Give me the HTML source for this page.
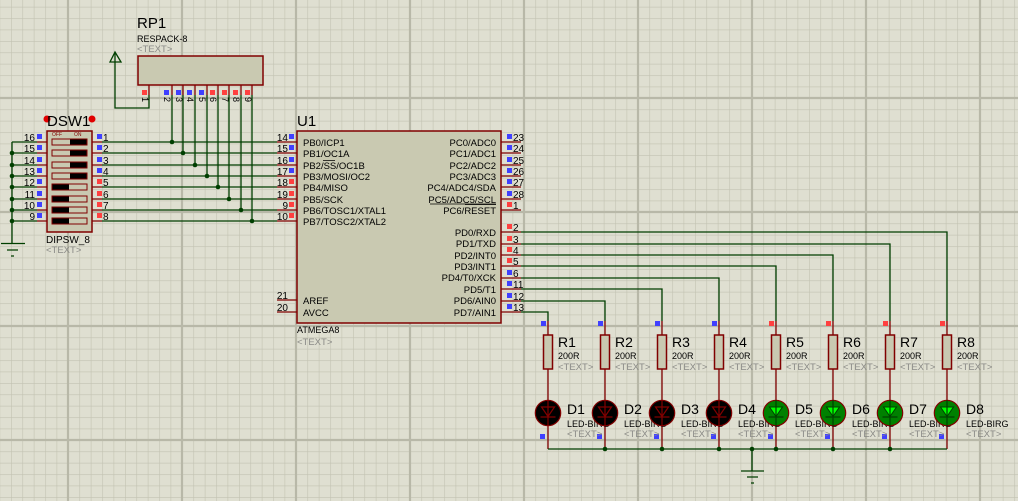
<!DOCTYPE html>
<html><head><meta charset="utf-8"><style>
html,body{margin:0;padding:0;background:#dfdfd1;}
svg{display:block;font-family:"Liberation Sans",sans-serif;}
.w{stroke:#003f00;stroke-width:1.3;fill:none}
.p{stroke:#800000;stroke-width:1.3;fill:none}
.b{fill:#c9c9b1;stroke:#800000;stroke-width:1.5}
.bl{fill:#4040ff}.rd{fill:#ff4040}
.t{font-size:10px;fill:#000}
.g{font-size:9.5px;fill:#8a8a86}
.l{font-size:15px;fill:#000}
.dot{fill:#003f00}
</style></head><body>
<svg width="1018" height="501" viewBox="0 0 1018 501">
<defs>
<pattern id="gr" x="11" y="6.8" width="11.4" height="11.4" patternUnits="userSpaceOnUse">
<path d="M0 0V11.4M0 0H11.4" stroke="#c2c2b2" stroke-width="1.2"/>
</pattern>
</defs>
<rect width="1018" height="501" fill="#dfdfd1"/>
<rect width="1018" height="501" fill="url(#gr)"/>
<g stroke="#b8b8a8" stroke-width="2.2">
<path d="M68 0V501M182 0V501M296 0V501M410 0V501M524 0V501M638 0V501M752 0V501M866 0V501M980 0V501"/>
<path d="M0 98H1018M0 212H1018M0 326H1018M0 440H1018"/>
</g>

<!-- RP1 -->
<text x="137" y="28" class="l">RP1</text>
<text x="137" y="42" class="t" style="font-size:9px">RESPACK-8</text>
<text x="137" y="52" class="g">&lt;TEXT&gt;</text>
<rect x="138" y="56" width="125" height="29" class="b"/>
<path class="w" d="M149 95V108H115V53"/>
<path class="w" d="M115 52L110 62H121Z" fill="none"/>
<path class="p" d="M149 85V95M172 85V95M183 85V95M195 85V95M207 85V95M218 85V95M229 85V95M241 85V95M252 85V95"/>
<rect x="142" y="90" width="5" height="5" class="rd"/>
<rect x="164" y="90" width="5" height="5" class="bl"/><rect x="176" y="90" width="5" height="5" class="bl"/>
<rect x="187" y="90" width="5" height="5" class="bl"/><rect x="199" y="90" width="5" height="5" class="bl"/>
<rect x="210" y="90" width="5" height="5" class="rd"/><rect x="222" y="90" width="5" height="5" class="rd"/>
<rect x="233" y="90" width="5" height="5" class="rd"/><rect x="245" y="90" width="5" height="5" class="rd"/>
<g class="t" style="font-size:9px">
<text transform="translate(142,97) rotate(90)">1</text>
<text transform="translate(164,97) rotate(90)">2</text>
<text transform="translate(176,97) rotate(90)">3</text>
<text transform="translate(187,97) rotate(90)">4</text>
<text transform="translate(199,97) rotate(90)">5</text>
<text transform="translate(210,97) rotate(90)">6</text>
<text transform="translate(222,97) rotate(90)">7</text>
<text transform="translate(233,97) rotate(90)">8</text>
<text transform="translate(245,97) rotate(90)">9</text>
</g>
<!-- vertical wires from RP1 -->
<path class="w" d="M172 95V142M183 95V153M195 95V165M207 95V176M218 95V187M229 95V199M241 95V210M252 95V221"/>

<!-- DSW1 -->
<circle cx="47" cy="119" r="3.5" fill="#e00000"/><circle cx="92" cy="119" r="3.5" fill="#e00000"/>
<text x="47" y="126" class="l">DSW1</text>
<rect x="47" y="131" width="45" height="101" class="b"/>
<text x="52" y="136" style="font-size:5px;fill:#800000">OFF</text>
<text x="74" y="136" style="font-size:5px;fill:#800000">ON</text>
<g stroke="#800000" stroke-width="1" fill="#c9c9b1">
<rect x="52" y="139" width="35" height="6"/><rect x="52" y="150" width="35" height="6"/>
<rect x="52" y="162" width="35" height="6"/><rect x="52" y="173" width="35" height="6"/>
<rect x="52" y="184" width="35" height="6"/><rect x="52" y="196" width="35" height="6"/>
<rect x="52" y="207" width="35" height="6"/><rect x="52" y="218" width="35" height="6"/>
</g>
<g fill="#000">
<rect x="70" y="139.5" width="16.5" height="5"/><rect x="70" y="150.5" width="16.5" height="5"/>
<rect x="70" y="162.5" width="16.5" height="5"/><rect x="70" y="173.5" width="16.5" height="5"/>
<rect x="52.5" y="184.5" width="16.5" height="5"/><rect x="52.5" y="196.5" width="16.5" height="5"/>
<rect x="52.5" y="207.5" width="16.5" height="5"/><rect x="52.5" y="218.5" width="16.5" height="5"/>
</g>
<text x="46" y="243" class="t">DIPSW_8</text>
<text x="46" y="253" class="g">&lt;TEXT&gt;</text>
<!-- left pins -->
<path class="p" d="M37 142H47M37 153H47M37 165H47M37 176H47M37 187H47M37 199H47M37 210H47M37 221H47"/>
<path class="w" d="M12 142H37M12 153H37M12 165H37M12 176H37M12 187H37M12 199H37M12 210H37M12 221H37M12 142V243M1 243.5H25M7 250H18M11 256H14"/>
<g class="dot"><circle cx="12" cy="153" r="2.3"/><circle cx="12" cy="165" r="2.3"/><circle cx="12" cy="176" r="2.3"/><circle cx="12" cy="187" r="2.3"/><circle cx="12" cy="199" r="2.3"/><circle cx="12" cy="210" r="2.3"/><circle cx="12" cy="221" r="2.3"/></g>
<g class="bl"><rect x="37" y="134" width="5" height="5"/><rect x="37" y="145" width="5" height="5"/><rect x="37" y="157" width="5" height="5"/><rect x="37" y="168" width="5" height="5"/><rect x="37" y="179" width="5" height="5"/><rect x="37" y="191" width="5" height="5"/><rect x="37" y="202" width="5" height="5"/><rect x="37" y="213" width="5" height="5"/></g>
<g class="t" text-anchor="end"><text x="35" y="141">16</text><text x="35" y="152">15</text><text x="35" y="164">14</text><text x="35" y="175">13</text><text x="35" y="186">12</text><text x="35" y="198">11</text><text x="35" y="209">10</text><text x="35" y="220">9</text></g>
<!-- right pins -->
<path class="p" d="M92 142H102M92 153H102M92 165H102M92 176H102M92 187H102M92 199H102M92 210H102M92 221H102"/>
<path class="w" d="M102 142H277M102 153H277M102 165H277M102 176H277M102 187H277M102 199H277M102 210H277M102 221H277"/>
<rect x="97" y="134" width="5" height="5" class="bl"/><rect x="97" y="145" width="5" height="5" class="bl"/><rect x="97" y="157" width="5" height="5" class="bl"/><rect x="97" y="168" width="5" height="5" class="bl"/>
<rect x="97" y="179" width="5" height="5" class="rd"/><rect x="97" y="191" width="5" height="5" class="rd"/><rect x="97" y="202" width="5" height="5" class="rd"/><rect x="97" y="213" width="5" height="5" class="rd"/>
<g class="t"><text x="103" y="141">1</text><text x="103" y="152">2</text><text x="103" y="164">3</text><text x="103" y="175">4</text><text x="103" y="186">5</text><text x="103" y="198">6</text><text x="103" y="209">7</text><text x="103" y="220">8</text></g>
<g class="dot"><circle cx="172" cy="142" r="2.3"/><circle cx="183" cy="153" r="2.3"/><circle cx="195" cy="165" r="2.3"/><circle cx="207" cy="176" r="2.3"/><circle cx="218" cy="187" r="2.3"/><circle cx="229" cy="199" r="2.3"/><circle cx="241" cy="210" r="2.3"/><circle cx="252" cy="221" r="2.3"/></g>

<!-- U1 -->
<text x="297" y="126" class="l">U1</text>
<rect x="297" y="131" width="204" height="192" class="b"/>
<path class="p" d="M277 142H297M277 153H297M277 165H297M277 176H297M277 187H297M277 199H297M277 210H297M277 221H297M277 300H297M277 312H297"/>
<rect x="289" y="134" width="5" height="5" class="bl"/><rect x="289" y="145" width="5" height="5" class="bl"/><rect x="289" y="157" width="5" height="5" class="bl"/><rect x="289" y="168" width="5" height="5" class="bl"/>
<rect x="289" y="179" width="5" height="5" class="rd"/><rect x="289" y="191" width="5" height="5" class="rd"/><rect x="289" y="202" width="5" height="5" class="rd"/><rect x="289" y="213" width="5" height="5" class="rd"/>
<g class="t" text-anchor="end"><text x="288" y="141">14</text><text x="288" y="152">15</text><text x="288" y="164">16</text><text x="288" y="175">17</text><text x="288" y="186">18</text><text x="288" y="198">19</text><text x="288" y="209">9</text><text x="288" y="220">10</text><text x="288" y="299">21</text><text x="288" y="311">20</text></g>
<g class="t" style="font-size:9.5px">
<text x="303" y="146">PB0/ICP1</text><text x="303" y="157">PB1/OC1A</text><text x="303" y="169">PB2/SS/OC1B</text><text x="303" y="180">PB3/MOSI/OC2</text><text x="303" y="191">PB4/MISO</text><text x="303" y="203">PB5/SCK</text><text x="303" y="214">PB6/TOSC1/XTAL1</text><text x="303" y="225">PB7/TOSC2/XTAL2</text>
<text x="303" y="304">AREF</text><text x="303" y="316">AVCC</text>
</g>
<path d="M323 160.5H335M430 204H496M465 204.5H496" stroke="#000" stroke-width="0.8"/>
<g class="t" style="font-size:9.5px" text-anchor="end">
<text x="496" y="146">PC0/ADC0</text><text x="496" y="157">PC1/ADC1</text><text x="496" y="169">PC2/ADC2</text><text x="496" y="180">PC3/ADC3</text><text x="496" y="191">PC4/ADC4/SDA</text><text x="496" y="203">PC5/ADC5/SCL</text><text x="496" y="214">PC6/RESET</text>
<text x="496" y="236">PD0/RXD</text><text x="496" y="247">PD1/TXD</text><text x="496" y="259">PD2/INT0</text><text x="496" y="270">PD3/INT1</text><text x="496" y="281">PD4/T0/XCK</text><text x="496" y="293">PD5/T1</text><text x="496" y="304">PD6/AIN0</text><text x="496" y="316">PD7/AIN1</text>
</g>
<path class="p" d="M501 142H521M501 153H521M501 165H521M501 176H521M501 187H521M501 199H521M501 210H521M501 232H521M501 244H521M501 255H521M501 266H521M501 278H521M501 289H521M501 301H521M501 312H521"/>
<g class="bl"><rect x="507" y="134" width="5" height="5"/><rect x="507" y="145" width="5" height="5"/><rect x="507" y="157" width="5" height="5"/><rect x="507" y="168" width="5" height="5"/><rect x="507" y="179" width="5" height="5"/><rect x="507" y="191" width="5" height="5"/>
<rect x="507" y="270" width="5" height="5"/><rect x="507" y="281" width="5" height="5"/><rect x="507" y="293" width="5" height="5"/><rect x="507" y="304" width="5" height="5"/></g>
<g class="rd"><rect x="507" y="202" width="5" height="5"/><rect x="507" y="224" width="5" height="5"/><rect x="507" y="236" width="5" height="5"/><rect x="507" y="247" width="5" height="5"/><rect x="507" y="258" width="5" height="5"/></g>
<g class="t"><text x="513" y="141">23</text><text x="513" y="152">24</text><text x="513" y="164">25</text><text x="513" y="175">26</text><text x="513" y="186">27</text><text x="513" y="198">28</text><text x="513" y="209">1</text>
<text x="513" y="231">2</text><text x="513" y="243">3</text><text x="513" y="254">4</text><text x="513" y="265">5</text><text x="513" y="277">6</text><text x="513" y="288">11</text><text x="513" y="300">12</text><text x="513" y="311">13</text></g>
<text x="297" y="333" class="t" style="font-size:9px">ATMEGA8</text>
<text x="297" y="345" class="g">&lt;TEXT&gt;</text>

<!-- PD wires -->
<path class="w" d="M521 232H947V321M521 244H890V321M521 255H833V321M521 266H776V321M521 278H719V321M521 289H662V321M521 301H605V321M521 312H548V321"/>

<!-- resistors & LEDs -->
<g class="p">
<path d="M548 321V335M548 369V449M605 321V335M605 369V449M662 321V335M662 369V449M719 321V335M719 369V449M776 321V335M776 369V449M833 321V335M833 369V449M890 321V335M890 369V449M947 321V335M947 369V449"/>
</g>
<g class="b"><rect x="543.5" y="335" width="9" height="34"/><rect x="600.5" y="335" width="9" height="34"/><rect x="657.5" y="335" width="9" height="34"/><rect x="714.5" y="335" width="9" height="34"/><rect x="771.5" y="335" width="9" height="34"/><rect x="828.5" y="335" width="9" height="34"/><rect x="885.5" y="335" width="9" height="34"/><rect x="942.5" y="335" width="9" height="34"/></g>
<g class="bl"><rect x="541" y="321" width="5" height="5"/><rect x="598" y="321" width="5" height="5"/><rect x="655" y="321" width="5" height="5"/><rect x="712" y="321" width="5" height="5"/></g>
<g class="rd"><rect x="769" y="321" width="5" height="5"/><rect x="826" y="321" width="5" height="5"/><rect x="883" y="321" width="5" height="5"/><rect x="940" y="321" width="5" height="5"/></g>
<g class="bl"><rect x="540" y="434" width="5" height="5"/><rect x="597" y="434" width="5" height="5"/><rect x="654" y="434" width="5" height="5"/><rect x="711" y="434" width="5" height="5"/><rect x="768" y="434" width="5" height="5"/><rect x="825" y="434" width="5" height="5"/><rect x="882" y="434" width="5" height="5"/><rect x="939" y="434" width="5" height="5"/></g>
<g class="l" style="font-size:14px"><text x="558" y="347">R1</text><text x="615" y="347">R2</text><text x="672" y="347">R3</text><text x="729" y="347">R4</text><text x="786" y="347">R5</text><text x="843" y="347">R6</text><text x="900" y="347">R7</text><text x="957" y="347">R8</text></g>
<g class="t" style="font-size:9px"><text x="558" y="359">200R</text><text x="615" y="359">200R</text><text x="672" y="359">200R</text><text x="729" y="359">200R</text><text x="786" y="359">200R</text><text x="843" y="359">200R</text><text x="900" y="359">200R</text><text x="957" y="359">200R</text></g>
<g class="g"><text x="558" y="370">&lt;TEXT&gt;</text><text x="615" y="370">&lt;TEXT&gt;</text><text x="672" y="370">&lt;TEXT&gt;</text><text x="729" y="370">&lt;TEXT&gt;</text><text x="786" y="370">&lt;TEXT&gt;</text><text x="843" y="370">&lt;TEXT&gt;</text><text x="900" y="370">&lt;TEXT&gt;</text><text x="957" y="370">&lt;TEXT&gt;</text></g>
<g class="l" style="font-size:14px"><text x="567" y="414">D1</text><text x="624" y="414">D2</text><text x="681" y="414">D3</text><text x="738" y="414">D4</text><text x="795" y="414">D5</text><text x="852" y="414">D6</text><text x="909" y="414">D7</text><text x="966" y="414">D8</text></g>
<g class="t" style="font-size:9px"><text x="567" y="427">LED-BIRG</text><text x="624" y="427">LED-BIRG</text><text x="681" y="427">LED-BIRG</text><text x="738" y="427">LED-BIRG</text><text x="795" y="427">LED-BIRG</text><text x="852" y="427">LED-BIRG</text><text x="909" y="427">LED-BIRG</text><text x="966" y="427">LED-BIRG</text></g>
<g class="g"><text x="567" y="437">&lt;TEXT&gt;</text><text x="624" y="437">&lt;TEXT&gt;</text><text x="681" y="437">&lt;TEXT&gt;</text><text x="738" y="437">&lt;TEXT&gt;</text><text x="795" y="437">&lt;TEXT&gt;</text><text x="852" y="437">&lt;TEXT&gt;</text><text x="909" y="437">&lt;TEXT&gt;</text><text x="966" y="437">&lt;TEXT&gt;</text></g>
<!-- red LEDs -->
<g id="ledr" stroke="#800000" stroke-width="1.2">
<circle cx="548" cy="413" r="12.7" fill="#000"/><path d="M548 400V426M541.5 407H554.5L548 416.5Z M540.5 417H555.5" fill="none"/>
<circle cx="605" cy="413" r="12.7" fill="#000"/><path d="M605 400V426M598.5 407H611.5L605 416.5Z M597.5 417H612.5" fill="none"/>
<circle cx="662" cy="413" r="12.7" fill="#000"/><path d="M662 400V426M655.5 407H668.5L662 416.5Z M654.5 417H669.5" fill="none"/>
<circle cx="719" cy="413" r="12.7" fill="#000"/><path d="M719 400V426M712.5 407H725.5L719 416.5Z M711.5 417H726.5" fill="none"/>
</g>
<g stroke="#800000" stroke-width="1.2">
<circle cx="776" cy="413" r="12.7" fill="#008000"/><circle cx="833" cy="413" r="12.7" fill="#008000"/><circle cx="890" cy="413" r="12.7" fill="#008000"/><circle cx="947" cy="413" r="12.7" fill="#008000"/>
</g>
<g fill="#00ff00" stroke="#004000" stroke-width="1">
<path d="M769.5 407H782.5L776 416.5Z"/><path d="M826.5 407H839.5L833 416.5Z"/><path d="M883.5 407H896.5L890 416.5Z"/><path d="M940.5 407H953.5L947 416.5Z"/>
</g>
<path d="M776 400V426M768.5 417H783.5M833 400V426M825.5 417H840.5M890 400V426M882.5 417H897.5M947 400V426M939.5 417H954.5" stroke="#004000" stroke-width="1.2"/>
<!-- bottom bus -->
<path class="w" d="M548 449H947M752 449V471M741 471H764M747 477H758M751 483H754"/>
<g class="dot"><circle cx="605" cy="449" r="2.3"/><circle cx="662" cy="449" r="2.3"/><circle cx="719" cy="449" r="2.3"/><circle cx="752" cy="449" r="2.3"/><circle cx="776" cy="449" r="2.3"/><circle cx="833" cy="449" r="2.3"/><circle cx="890" cy="449" r="2.3"/></g>
</svg>
</body></html>
